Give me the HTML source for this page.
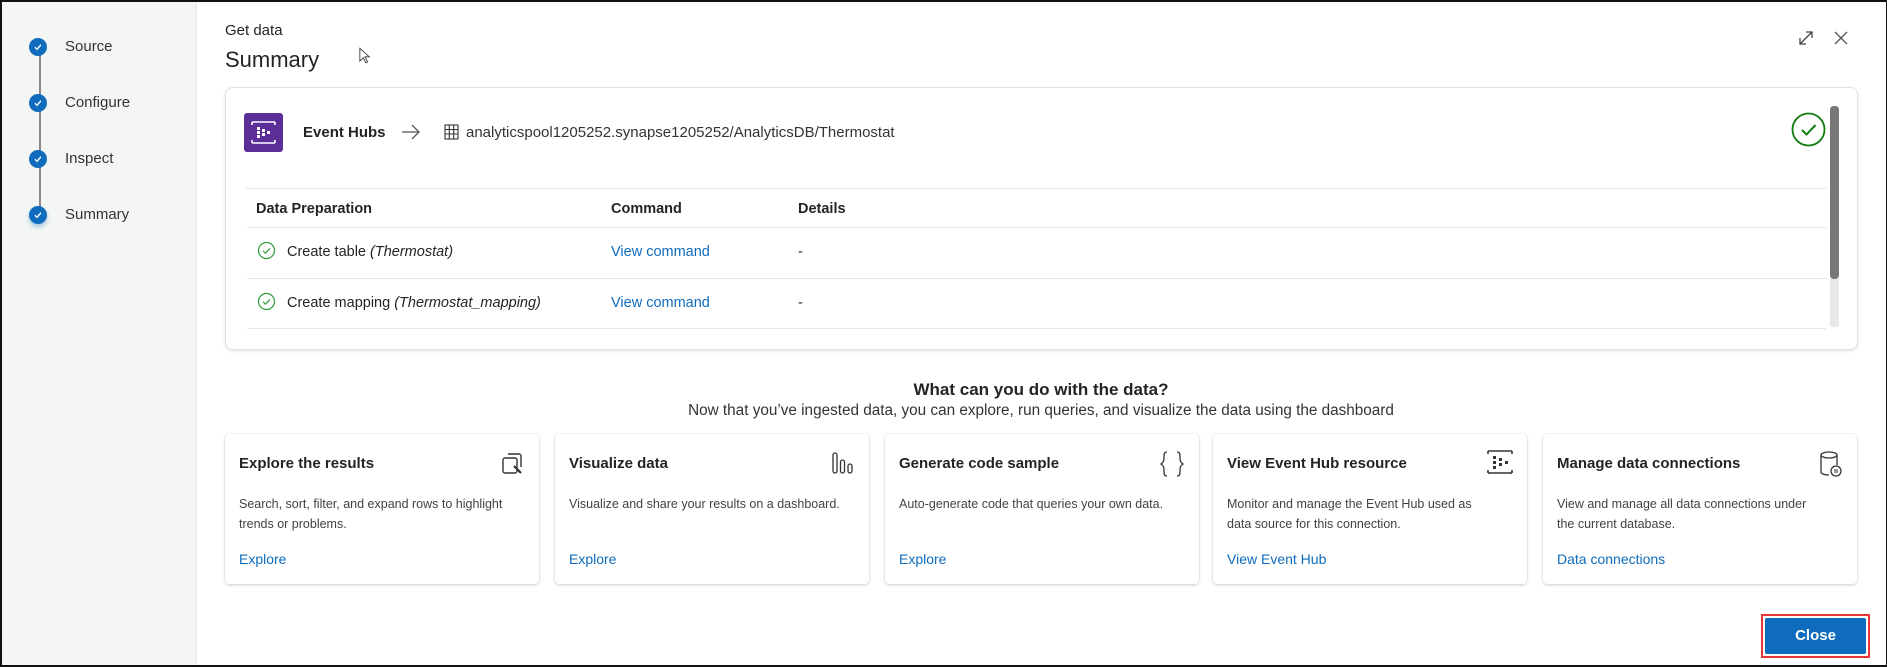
<!DOCTYPE html>
<html><head><style>
*{box-sizing:border-box;margin:0;padding:0}
body{width:1887px;height:667px;overflow:hidden;font-family:"Liberation Sans",sans-serif;color:#242424;background:#fff;position:relative}
.frame{position:absolute;left:0;top:0;width:1887px;height:667px;border:2px solid #111;border-right-width:1px}
.side{position:absolute;left:2px;top:2px;width:195px;height:663px;background:#f3f6f4;border-right:1px solid #e6e9e7}
.vline{position:absolute;left:37px;top:50px;width:2px;height:165px;background:#8a8a8a}
.step{position:absolute;left:29px;width:18px;height:18px;border-radius:50%;background:#0f6cbd}
.step svg{position:absolute;left:4px;top:4px}
.slabel{position:absolute;left:65px;font-size:15px;color:#333}
.abs{position:absolute;white-space:nowrap}
.card{position:absolute;left:225px;top:87px;width:1633px;height:263px;border:1px solid #e1e1e1;border-radius:8px;box-shadow:0 1px 3px rgba(0,0,0,.12)}
.hl{position:absolute;height:1px;background:#e6e6e6}
.link{color:#0f6cbd}
.tile{position:absolute;top:434px;width:314px;height:150px;border-radius:4px;box-shadow:0 1px 3px rgba(0,0,0,.18),0 0 1px rgba(0,0,0,.15);background:#fff}
.tile .t{position:absolute;left:14px;top:21px;font-size:15px;font-weight:bold;color:#242424}
.tile .d{position:absolute;left:14px;top:60px;width:295px;font-size:12.5px;line-height:20px;color:#424242;white-space:nowrap}
.tile .l{position:absolute;left:14px;top:117px;font-size:14px;color:#0f6cbd}
.tile svg{position:absolute;right:14px;top:16px}
</style></head><body>
<div class="frame"></div>
<div class="side">
<div class="vline"></div>
</div>
<div class="step" style="top:38px"><svg width="10" height="10" viewBox="0 0 10 10"><path d="M2 5.2l2 2 4-4.4" stroke="#fff" stroke-width="1.4" fill="none"/></svg></div>
<div class="step" style="top:94px"><svg width="10" height="10" viewBox="0 0 10 10"><path d="M2 5.2l2 2 4-4.4" stroke="#fff" stroke-width="1.4" fill="none"/></svg></div>
<div class="step" style="top:150px"><svg width="10" height="10" viewBox="0 0 10 10"><path d="M2 5.2l2 2 4-4.4" stroke="#fff" stroke-width="1.4" fill="none"/></svg></div>
<div class="step" style="top:206px;box-shadow:0 3px 5px rgba(15,108,189,.35)"><svg width="10" height="10" viewBox="0 0 10 10"><path d="M2 5.2l2 2 4-4.4" stroke="#fff" stroke-width="1.4" fill="none"/></svg></div>
<div class="slabel" style="top:38px">Source</div>
<div class="slabel" style="top:94px">Configure</div>
<div class="slabel" style="top:150px">Inspect</div>
<div class="slabel" style="top:206px">Summary</div>

<div class="abs" style="left:225px;top:22px;font-size:15px">Get data</div>
<div class="abs" style="left:225px;top:47px;font-size:22px">Summary</div>
<svg class="abs" style="left:359px;top:47px" width="12" height="18" viewBox="0 0 14 20"><path d="M1 1v15l4-4 3 6 2-1-3-6h5z" fill="#fff" stroke="#333" stroke-width="1"/></svg>
<svg class="abs" style="left:1797px;top:29px" width="18" height="18" viewBox="0 0 18 18"><path d="M3 15L15 3M9 3h6v6M3 9v6h6" stroke="#444" stroke-width="1.3" fill="none"/></svg>
<svg class="abs" style="left:1833px;top:30px" width="16" height="16" viewBox="0 0 16 16"><path d="M2 2l12 12M14 2L2 14" stroke="#555" stroke-width="1.3"/></svg>

<div class="card"></div>
<div class="abs" style="left:244px;top:113px;width:39px;height:39px;background:#5c2e98;border-radius:3px"></div>
<svg class="abs" style="left:251px;top:121px" width="25" height="23" viewBox="0 0 25 23"><path d="M1 1h23M1 22h23M1 1v3M24 1v3M1 19v3M24 19v3" stroke="#fff" stroke-width="1.6" fill="none"/><rect x="6" y="6" width="3" height="3" fill="#fff"/><rect x="6" y="10" width="3" height="3" fill="#fff"/><rect x="6" y="14" width="3" height="3" fill="#fff"/><rect x="11" y="8" width="3" height="3" fill="#fff"/><rect x="11" y="12" width="3" height="3" fill="#fff"/><rect x="16" y="10" width="3" height="3" fill="#fff"/></svg>
<div class="abs" style="left:303px;top:124px;font-size:15px;font-weight:bold">Event Hubs</div>
<svg class="abs" style="left:401px;top:124px" width="20" height="16" viewBox="0 0 20 16"><path d="M1 8h17M11 1l7 7-7 7" stroke="#555" stroke-width="1.3" fill="none"/></svg>
<svg class="abs" style="left:444px;top:124px" width="15" height="16" viewBox="0 0 15 16"><rect x="1" y="1" width="13" height="14" fill="none" stroke="#333" stroke-width="1.1"/><path d="M1 5.5h13M1 10h13M5.3 1v14M9.7 1v14" stroke="#333" stroke-width="1.1"/></svg>
<div class="abs" style="left:466px;top:124px;font-size:15px;color:#333">analyticspool1205252.synapse1205252/AnalyticsDB/Thermostat</div>
<svg class="abs" style="left:1791px;top:112px" width="35" height="35" viewBox="0 0 35 35"><circle cx="17.5" cy="17.5" r="16" fill="none" stroke="#107c10" stroke-width="1.8"/><path d="M11 18l4.5 4.5 9-9.5" stroke="#107c10" stroke-width="2" fill="none"/></svg>
<div class="abs" style="left:1830px;top:106px;width:9px;height:221px;background:#e8e8e8;border-radius:2px"></div>
<div class="abs" style="left:1830px;top:106px;width:9px;height:173px;background:#777;border-radius:4px"></div>
<div class="hl" style="left:246px;top:188px;width:1580px"></div>
<div class="abs" style="left:256px;top:201px;font-size:14.5px;font-weight:bold">Data Preparation</div>
<div class="abs" style="left:611px;top:201px;font-size:14.5px;font-weight:bold">Command</div>
<div class="abs" style="left:798px;top:201px;font-size:14.5px;font-weight:bold">Details</div>
<div class="hl" style="left:247px;top:227px;width:1579px"></div>
<svg class="abs" style="left:257px;top:241px" width="19" height="19" viewBox="0 0 19 19"><circle cx="9.5" cy="9.5" r="8" fill="none" stroke="#2e9e3e" stroke-width="1.2"/><path d="M6 9.8l2.4 2.4 4.6-4.8" stroke="#2e9e3e" stroke-width="1.2" fill="none"/></svg>
<div class="abs" style="left:287px;top:244px;font-size:14.5px">Create table <i>(Thermostat)</i></div>
<div class="abs link" style="left:611px;top:244px;font-size:14.5px">View command</div>
<div class="abs" style="left:798px;top:244px;font-size:14.5px">-</div>
<div class="hl" style="left:247px;top:278px;width:1579px"></div>
<svg class="abs" style="left:257px;top:292px" width="19" height="19" viewBox="0 0 19 19"><circle cx="9.5" cy="9.5" r="8" fill="none" stroke="#2e9e3e" stroke-width="1.2"/><path d="M6 9.8l2.4 2.4 4.6-4.8" stroke="#2e9e3e" stroke-width="1.2" fill="none"/></svg>
<div class="abs" style="left:287px;top:295px;font-size:14.5px">Create mapping <i>(Thermostat_mapping)</i></div>
<div class="abs link" style="left:611px;top:295px;font-size:14.5px">View command</div>
<div class="abs" style="left:798px;top:295px;font-size:14.5px">-</div>
<div class="hl" style="left:247px;top:328px;width:1579px"></div>

<div class="abs" style="left:0;width:2082px;text-align:center;top:380px;font-size:17px;font-weight:bold">What can you do with the data?</div>
<div class="abs" style="left:0;width:2082px;text-align:center;top:402px;font-size:15.3px;color:#333">Now that you’ve ingested data, you can explore, run queries, and visualize the data using the dashboard</div>

<div class="tile" style="left:225px"><div class="t">Explore the results</div><div class="d">Search, sort, filter, and expand rows to highlight<br>trends or problems.</div><div class="l">Explore</div>
<svg width="26" height="26" viewBox="0 0 26 26"><path d="M9 4h11a2 2 0 0 1 2 2v11" stroke="#333" stroke-width="1.4" fill="none"/><rect x="4" y="8" width="14" height="15" rx="2" fill="none" stroke="#333" stroke-width="1.4"/><path d="M15 16l7 7" stroke="#333" stroke-width="2.2"/></svg></div>
<div class="tile" style="left:555px"><div class="t">Visualize data</div><div class="d">Visualize and share your results on a dashboard.</div><div class="l">Explore</div>
<svg width="24" height="26" viewBox="0 0 24 26"><rect x="2" y="3" width="4" height="20" rx="2" fill="none" stroke="#333" stroke-width="1.3"/><rect x="9.5" y="10" width="4" height="13" rx="2" fill="none" stroke="#333" stroke-width="1.3"/><rect x="17" y="14" width="4" height="9" rx="2" fill="none" stroke="#333" stroke-width="1.3"/></svg></div>
<div class="tile" style="left:885px"><div class="t">Generate code sample</div><div class="d">Auto-generate code that queries your own data.</div><div class="l">Explore</div>
<svg width="26" height="28" viewBox="0 0 26 28"><path d="M8 2c-3 0-3 2-3 5s0 5-3 7c3 2 3 4 3 7s0 5 3 5M18 2c3 0 3 2 3 5s0 5 3 7c-3 2-3 4-3 7s0 5-3 5" stroke="#333" stroke-width="1.3" fill="none"/></svg></div>
<div class="tile" style="left:1213px"><div class="t">View Event Hub resource</div><div class="d">Monitor and manage the Event Hub used as<br>data source for this connection.</div><div class="l">View Event Hub</div>
<svg width="26" height="24" viewBox="0 0 26 24"><path d="M1 1h24M1 23h24M1 1v3M25 1v3M1 20v3M25 20v3" stroke="#333" stroke-width="1.6" fill="none"/><rect x="6" y="6" width="3" height="3" fill="#333"/><rect x="6" y="11" width="3" height="3" fill="#333"/><rect x="6" y="16" width="3" height="3" fill="#333"/><rect x="12" y="8" width="3" height="3" fill="#333"/><rect x="12" y="13" width="3" height="3" fill="#333"/><rect x="18" y="11" width="3" height="3" fill="#333"/></svg></div>
<div class="tile" style="left:1543px"><div class="t">Manage data connections</div><div class="d">View and manage all data connections under<br>the current database.</div><div class="l">Data connections</div>
<svg width="24" height="28" viewBox="0 0 24 28"><ellipse cx="10" cy="5" rx="8" ry="3" fill="none" stroke="#333" stroke-width="1.3"/><path d="M2 5v17c0 2 4 3 8 3M18 5v10" stroke="#333" stroke-width="1.3" fill="none"/><circle cx="17" cy="21" r="5" fill="#fff" stroke="#333" stroke-width="1.3"/><path d="M15 20h4M15 22h4" stroke="#333" stroke-width="1"/></svg></div>

<div class="abs" style="left:1761px;top:614px;width:109px;height:44px;border:2px solid #e8363b"></div>
<div class="abs" style="left:1765px;top:618px;width:101px;height:36px;background:#0f6cbd;color:#fff;font-weight:bold;font-size:15px;text-align:center;line-height:36px;border-radius:2px">Close</div>
</body></html>
